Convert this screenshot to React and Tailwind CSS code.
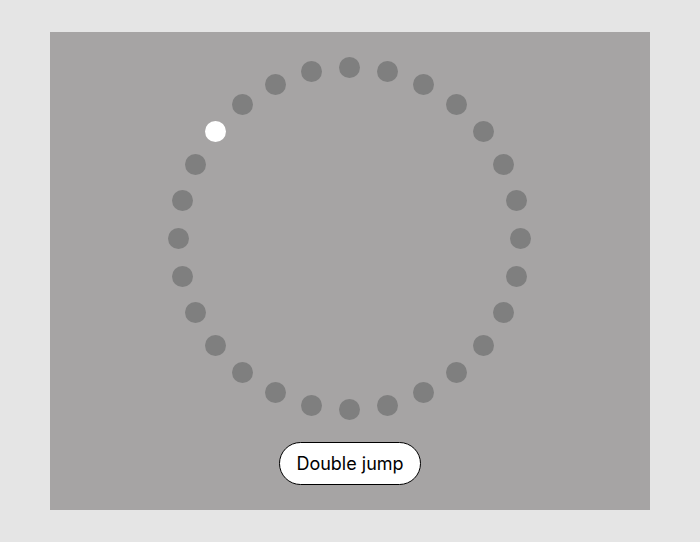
import React from "react";

const COUNT = 28;
const RADIUS = 171;
const DOT = 20;
const BOX = 362;
const ACTIVE = 24;

function Ring() {
  const cx = BOX / 2 - 1;
  const cy = BOX / 2;
  return (
    <div className="relative w-[362px] h-[362px]">
      {Array.from({ length: COUNT }, (_, i) => {
        const a = (i * 2 * Math.PI) / COUNT;
        const x = cx + RADIUS * Math.sin(a) - DOT / 2;
        const y = cy - RADIUS * Math.cos(a) - DOT / 2;
        return (
          <div
            key={i}
            className={`absolute w-[21px] h-[21px] rounded-full ${
              i === ACTIVE ? "bg-white" : "bg-[#7f7f7f]"
            }`}
            style={{ left: x, top: y }}
          />
        );
      })}
    </div>
  );
}

export default function App() {
  return (
    <div className="w-[700px] h-[542px] bg-[#e5e5e5] flex items-center justify-center font-['Inter',sans-serif]">
      <div className="w-[600px] h-[478px] bg-[#a6a4a4] flex flex-col items-center pt-[25px]">
        <Ring />
        <button className="mt-[23px] h-[43px] px-4 rounded-full bg-white border border-black text-[18px] text-black leading-none">
          Double jump
        </button>
      </div>
    </div>
  );
}
